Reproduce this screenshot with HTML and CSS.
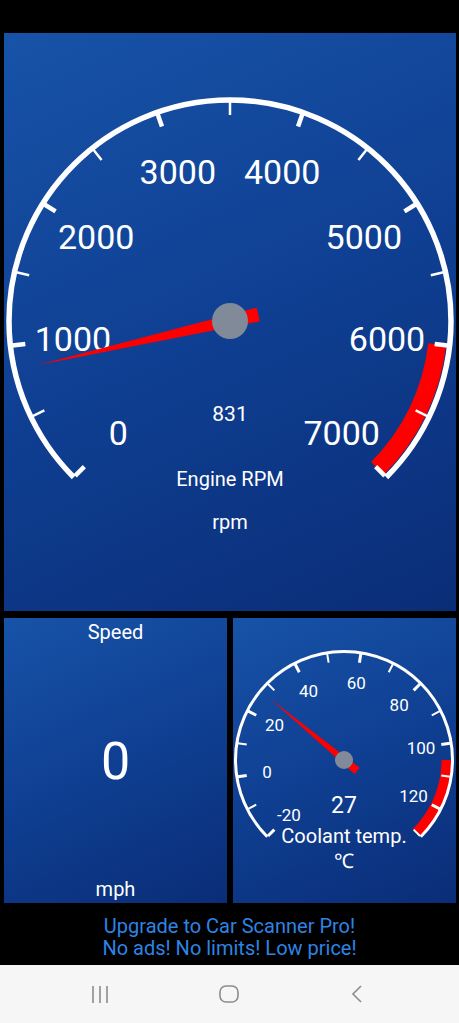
FILE: index.html
```html
<!DOCTYPE html>
<html lang="en">
<head>
  <meta charset="UTF-8">
  <title>Car Scanner - Dashboard</title>
  <link rel="stylesheet" href="styles.css">
</head>
<body>

  <div class="status-space"></div>

  <div class="panel panel-main">
    <svg id="rpmGauge" class="gauge" viewBox="0 0 452 578" width="452" height="578">
      <text class="g-value" x="226" y="388" font-size="21">831</text>
      <text class="g-title" x="226" y="453" font-size="20">Engine RPM</text>
      <text class="g-title" x="226" y="496" font-size="20">rpm</text>
    </svg>
  </div>

  <div class="row">
    <div class="panel panel-speed">
      <div class="speed-title">Speed</div>
      <div class="speed-value">0</div>
      <div class="speed-unit">mph</div>
    </div>
    <div class="panel panel-temp">
      <svg id="tempGauge" class="gauge" viewBox="0 0 223 285" width="223" height="285">
        <text class="g-value" x="111" y="195" font-size="23">27</text>
        <text class="g-title" x="111" y="225" font-size="20">Coolant temp.</text>
        <text class="g-title" x="111" y="250" font-size="20">℃</text>
      </svg>
    </div>
  </div>

  <div class="promo">
    <div>Upgrade to Car Scanner Pro!</div>
    <div>No ads! No limits! Low price!</div>
  </div>

  <div class="navbar">
    <svg class="nav-icon" viewBox="0 0 20 20" width="20" height="20">
      <path d="M3 2v17M10 2v17M17 2v17" />
    </svg>
    <svg class="nav-icon" viewBox="0 0 20 20" width="20" height="20">
      <rect x="1" y="2" width="18" height="16" rx="6" />
    </svg>
    <svg class="nav-icon" viewBox="0 0 20 20" width="20" height="20">
      <path d="M13 2l-8 8 8 8" />
    </svg>
  </div>

  <script>
    const NS = "http://www.w3.org/2000/svg";

    function pt(cx, cy, r, deg) {
      const a = deg * Math.PI / 180;
      return [cx + r * Math.sin(a), cy - r * Math.cos(a)];
    }

    function arcPath(cx, cy, r, a0, a1) {
      const p0 = pt(cx, cy, r, a0);
      const p1 = pt(cx, cy, r, a1);
      const large = (a1 - a0) > 180 ? 1 : 0;
      return `M${p0[0]} ${p0[1]} A${r} ${r} 0 ${large} 1 ${p1[0]} ${p1[1]}`;
    }

    function add(svg, tag, attrs) {
      const el = document.createElementNS(NS, tag);
      for (const k in attrs) el.setAttribute(k, attrs[k]);
      svg.appendChild(el);
      return el;
    }

    function drawGauge(g) {
      const svg = document.getElementById(g.id);
      const angle = v => -135 + (v - g.min) / (g.max - g.min) * 270;
      const layer = document.createElementNS(NS, "g");
      svg.insertBefore(layer, svg.firstChild);

      // red zone
      add(layer, "path", {
        d: arcPath(g.cx, g.cy, g.redR, angle(g.redFrom), angle(g.max)),
        stroke: "#ff0000", "stroke-width": g.redW, fill: "none"
      });

      // outer ring
      add(layer, "path", {
        d: arcPath(g.cx, g.cy, g.arcR, -135, 135),
        stroke: "#fff", "stroke-width": g.arcW, fill: "none"
      });

      // ticks + labels
      for (let v = g.min; v <= g.max; v += g.minor) {
        const a = angle(v);
        const major = (v - g.min) % g.major === 0;
        const p0 = pt(g.cx, g.cy, g.tickOuter, a);
        const p1 = pt(g.cx, g.cy, g.tickOuter - g.tickLen, a);
        add(layer, "line", {
          x1: p0[0], y1: p0[1], x2: p1[0], y2: p1[1],
          stroke: "#fff", "stroke-width": major ? g.majorW : g.minorW
        });
        if (major) {
          const lp = pt(g.cx, g.cy, g.labelR, a);
          const t = add(layer, "text", {
            x: lp[0], y: lp[1] + g.labelSize * 0.36,
            class: "g-label", "font-size": g.labelSize
          });
          t.textContent = v;
        }
      }

      // needle
      const na = angle(g.value);
      add(svg, "polygon", {
        points: `0,${-g.needle} ${-g.half},${g.tail} ${g.half},${g.tail}`,
        fill: "#ff0000",
        transform: `translate(${g.cx} ${g.cy}) rotate(${na})`
      });
      add(svg, "circle", { cx: g.cx, cy: g.cy, r: g.hub, fill: "#808a99" });
    }

    drawGauge({
      id: "rpmGauge", cx: 226, cy: 288, min: 0, max: 7000, value: 831,
      arcR: 221, arcW: 5.5, redFrom: 6000, redR: 208.5, redW: 18,
      tickOuter: 219, tickLen: 13, majorW: 4.5, minorW: 2.5,
      minor: 500, major: 1000, labelR: 158, labelSize: 34,
      needle: 198, tail: 29, half: 7, hub: 18
    });

    drawGauge({
      id: "tempGauge", cx: 111, cy: 142, min: -20, max: 130, value: 27,
      arcR: 108.5, arcW: 3, redFrom: 105, redR: 102.5, redW: 10,
      tickOuter: 107.5, tickLen: 9, majorW: 3, minorW: 2,
      minor: 10, major: 20, labelR: 78, labelSize: 17,
      needle: 96, tail: 17, half: 4, hub: 9
    });
  </script>

</body>
</html>
```

FILE: styles.css
```css
body {
  margin: 0;
  background: black;
  font-family: Roboto, "Noto Sans", sans-serif;
  color: white;
  width: 459px;
  height: 1023px;
  overflow: hidden;
}

.status-space {
  height: 33px;
}

.panel {
  background: linear-gradient(155deg, #1753a8 0%, #0f3f92 50%, #0a2d77 100%);
  overflow: hidden;
}

.panel-main {
  margin: 0 3px 0 4px;
  height: 578px;
}

.gauge {
  display: block;
}

.g-label,
.g-value,
.g-title {
  fill: white;
  text-anchor: middle;
  font-family: Roboto, "Noto Sans", sans-serif;
}

.row {
  display: flex;
  gap: 6px;
  margin: 7px 3px 0 4px;
  height: 285px;
}

.row .panel {
  flex: 1;
}

.panel-speed {
  display: flex;
  flex-direction: column;
  align-items: center;
  padding: 3px 0 3px;
}

.speed-title,
.speed-unit {
  font-size: 20px;
  line-height: 22px;
}

.speed-value {
  flex: 1;
  display: flex;
  align-items: center;
  font-size: 52px;
  padding-top: 2px;
}

.promo {
  height: 62px;
  box-sizing: border-box;
  padding-top: 6px;
  display: flex;
  flex-direction: column;
  justify-content: center;
  align-items: center;
  color: #2d84e4;
  font-size: 20px;
  line-height: 22px;
}

.navbar {
  height: 58px;
  background: #f6f6f6;
  display: flex;
  justify-content: space-between;
  align-items: center;
  padding: 0 91px 0 90px;
}

.nav-icon {
  fill: none;
  stroke: #8c8c8c;
  stroke-width: 1.6;
}
```
